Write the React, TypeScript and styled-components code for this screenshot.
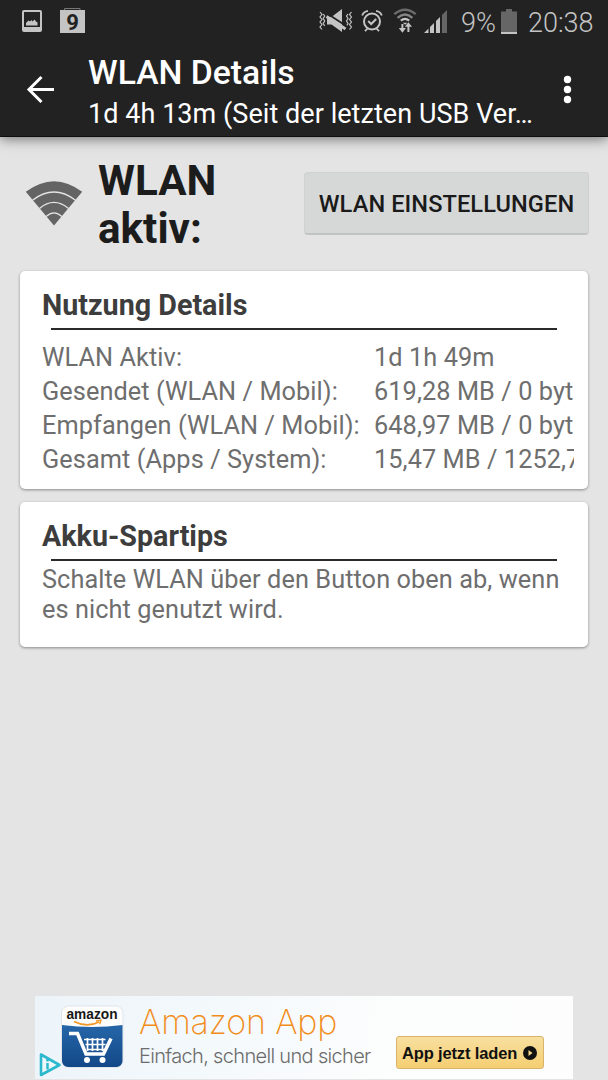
import React from "react";
import styled, { createGlobalStyle } from "styled-components";

const GlobalStyle = createGlobalStyle`
  * { box-sizing: border-box; }
  html, body { margin: 0; padding: 0; }
  body { background: #e4e4e4; font-family: Roboto, "Noto Sans", sans-serif; }
  svg { display: block; flex: none; }
`;

const Screen = styled.div`
  width: 608px;
  height: 1080px;
  display: flex;
  flex-direction: column;
  background: #e4e4e4;
  overflow: hidden;
`;

const Header = styled.header`
  height: 137px;
  flex: none;
  background: #222222;
  box-shadow: 0 2px 12px rgba(0, 0, 0, 0.5);
  border-bottom: 1px solid #0e0e0e;
`;

const StatusBar = styled.div`
  height: 42px;
  display: flex;
  align-items: center;
  padding: 0 15px 0 22px;
  color: #c4c4c4;
`;

const StatusGroup = styled.div<{ $gap: number; $push?: boolean }>`
  display: flex;
  align-items: center;
  gap: ${(p) => p.$gap}px;
  margin-left: ${(p) => (p.$push ? "auto" : "0")};
`;

const StatusText = styled.span<{ $width: number; $before: number }>`
  width: ${(p) => p.$width}px;
  margin-left: ${(p) => p.$before}px;
  font-size: 27px;
  line-height: 32px;
  padding-top: 3px;
  font-weight: 300;
  white-space: nowrap;
`;

const Toolbar = styled.div`
  height: 94px;
  display: flex;
  align-items: center;
  padding: 0 35px 0 26px;
`;

const Titles = styled.div`
  margin-left: 33px;
  width: 450px;
  color: #ffffff;
`;

const Title = styled.h1`
  margin: 0;
  padding-top: 5px;
  font-size: 33.7px;
  line-height: 40px;
  font-weight: 500;
`;

const Subtitle = styled.div`
  font-size: 27px;
  line-height: 32px;
  letter-spacing: 0.05px;
  white-space: nowrap;
  margin-top: 5px;
`;

const MoreIcon = styled.svg`
  margin-left: auto;
`;

const Summary = styled.section`
  height: 133px;
  flex: none;
  display: flex;
  align-items: center;
  padding: 0 19px 0 25px;
`;

const Heading = styled.h2`
  margin: 0 0 0 15px;
  width: 150px;
  padding-top: 2px;
  font-size: 42.2px;
  line-height: 48px;
  font-weight: 700;
  color: #1c1c1c;
`;

const SettingsButton = styled.button`
  margin-left: auto;
  width: 285px;
  height: 63px;
  padding: 1px 0 0;
  border: 1px solid #cfd1d0;
  border-bottom: 2px solid #c2c4c3;
  border-radius: 4px;
  background: #d6d8d7;
  color: #1a1a1a;
  font-family: inherit;
  font-size: 23.6px;
  letter-spacing: 0.08px;
  font-weight: 500;
  white-space: nowrap;
`;

const Card = styled.section<{ $height: number }>`
  height: ${(p) => p.$height}px;
  flex: none;
  margin: 1px 20px 12px;
  padding: 16px 14px 0 22px;
  border-radius: 5px;
  background: #ffffff;
  box-shadow: 0 1px 3px rgba(0, 0, 0, 0.4);
  color: #6e6e6e;
  font-size: 25.3px;
  letter-spacing: 0.08px;
`;

const CardTitle = styled.h3`
  margin: 0;
  font-size: 28.7px;
  line-height: 36px;
  font-weight: 700;
  letter-spacing: 0;
  color: #3d3d3d;
`;

const Rule = styled.div`
  height: 2px;
  margin: 5px 17px 0 9px;
  background: #2a2a2a;
`;

const Details = styled.dl`
  margin: 11px 0 0;
  display: grid;
  grid-template-columns: 332px 1fr;
  grid-auto-rows: 34px;
  line-height: 34px;
  white-space: nowrap;
`;

const Label = styled.dt`
  margin: 0;
`;

const Value = styled.dd`
  margin: 0;
  min-width: 0;
  overflow: hidden;
`;

const Tip = styled.p`
  margin: 4px 0 0;
  line-height: 30px;
  white-space: pre-line;
`;

const Ad = styled.aside`
  width: 538px;
  height: 83px;
  margin: auto 0 1px 35px;
  flex: none;
  display: flex;
  background: linear-gradient(100deg, #edf4f9 0%, #f4f9fc 35%, #fcfdfd 65%, #fdfdfd 100%);
`;

const AdCopy = styled.div`
  margin-left: 15px;
  width: 241px;
  font-family: Inter, "Liberation Sans", sans-serif;
  white-space: nowrap;
`;

const AdTitle = styled.div`
  padding-top: 5px;
  font-size: 34px;
  line-height: 42px;
  font-weight: 200;
  color: #f18d1d;
  letter-spacing: -0.15px;
`;

const AdText = styled.div`
  font-size: 20px;
  line-height: 26px;
  font-weight: 300;
  color: #6c6c6c;
  letter-spacing: -0.67px;
`;

const AdButton = styled.div`
  margin: 40px 0 0 16px;
  width: 148px;
  height: 33px;
  display: flex;
  align-items: center;
  gap: 6px;
  padding: 1px 0 0 5px;
  border: 1px solid #d9b36a;
  border-radius: 3px;
  background: linear-gradient(#f8dfa0, #f5cf72);
  color: #111111;
  font-family: "Liberation Sans", sans-serif;
  font-size: 16.500px;
  font-weight: 700;
  letter-spacing: -0.15px;
  white-space: nowrap;
`;

const PictureIcon = () => (
  <svg width="20" height="22" viewBox="0 0 20 22">
    <rect x="1" y="1" width="18" height="20" rx="1" fill="none" stroke="#c4c4c4" strokeWidth="2" />
    <rect x="2" y="17" width="16" height="3" fill="#c4c4c4" />
    <path d="M4 15.500v-2.500l2.500-2.500 1.500 1 1.500-1.500 1 1.500 2-2 1.500 2 1.500 1v3z" fill="#c4c4c4" />
  </svg>
);

const CalendarIcon = () => (
  <svg width="25" height="26" viewBox="0 0 25 26">
    <path d="M4.500 2V.5h15.500V2" fill="none" stroke="#777777" strokeWidth="1" />
    <path d="M0 2h25v23H0z" fill="#c4c4c4" />
    <text x="12.500" y="21.500" textAnchor="middle" fontFamily="Roboto, sans-serif" fontSize="22" fontWeight="700" fill="#222222">9</text>
  </svg>
);

const MuteIcon = () => (
  <svg width="34" height="26" viewBox="0 0 34 26">
    <g fill="none" stroke="#c4c4c4" strokeWidth="1.200">
      <path d="M1 4l2 2.500-2 2.500 2 2.500-2 2.500 2 2.500-2 2.500 2 2.500M4.200 6l1.500 2-1.500 2.500 1.500 2.500-1.500 2.500 1.500 2.500" />
      <path d="M32.500 4l-2 2.500 2 2.500-2 2.500 2 2.500-2 2.500 2 2.500-2 2.500M29 6l-1.500 2L29 10.500 27.500 13 29 15.500 27.500 18" />
    </g>
    <path d="M8 9h4.500L23 1v23l-10.500-7.500H8z" fill="#c4c4c4" />
    <path d="M8.500 5.800L28 18.500" stroke="#222222" strokeWidth="1.800" />
    <path d="M7.500 8.500L26.500 21" stroke="#c4c4c4" strokeWidth="3" />
  </svg>
);

const AlarmSvg = styled.svg`
  margin: 0 3px 0 1px;
`;

const AlarmIcon = () => (
  <AlarmSvg width="22" height="24" viewBox="0 0 22 24" fill="none" stroke="#c4c4c4">
    <circle cx="11" cy="12.500" r="8" strokeWidth="2" />
    <path d="M7.200 12l3 3 5-5" strokeWidth="2" />
    <path d="M1.200 6.500Q2.500 2.500 7 1.800M20.800 6.500Q19.500 2.500 15 1.800" strokeWidth="1.800" />
    <path d="M6.500 19.500l-2.500 2.700M15.500 19.500l2.500 2.700" strokeWidth="1.800" />
  </AlarmSvg>
);

const StatusWifiIcon = () => (
  <svg width="24" height="26" viewBox="0 0 24 26" fill="none">
    <path d="M1.300 6.200Q12 -2.800 22.700 6.200" stroke="#6c6c6c" strokeWidth="2.400" />
    <path d="M4.600 9.800Q12 3.200 19.400 9.800" stroke="#858585" strokeWidth="2.400" />
    <path d="M7.800 12.700Q12 9 16.200 12.700" stroke="#c4c4c4" strokeWidth="2.200" />
    <path d="M9.800 14.800h4.600l-2.300 2z" fill="#c4c4c4" />
    <path d="M9.400 16v5M15.400 24v-6" stroke="#c4c4c4" strokeWidth="2" />
    <path d="M5.800 20h7.200l-3.600 4.800zM11.800 18.800h7.200l-3.600-4.500z" fill="#c4c4c4" />
  </svg>
);

const SignalIcon = () => (
  <svg width="23" height="23" viewBox="0 0 23 23">
    <path d="M0 23l4.500-4.500V23zM6 17l4-4v10H6zM12 11l4-4v16h-4z" fill="#c4c4c4" />
    <path d="M18 5l5-5v23h-5z" fill="#666666" />
  </svg>
);

const BatteryIcon = () => (
  <svg width="16" height="25" viewBox="0 0 16 25">
    <path d="M5 0h6v2.500h5V25H0V2.500h5z" fill="#666666" />
    <path d="M0 23h16v2H0z" fill="#c4c4c4" />
  </svg>
);

const BackIcon = () => (
  <svg width="29" height="28" viewBox="0 0 29 28" fill="none" stroke="#ffffff" strokeWidth="3">
    <path d="M28 14.500H3M15.500 2L3 14.500 15.500 27" />
  </svg>
);

const WifiIcon = () => (
  <svg width="58" height="46" viewBox="0 0 58 46">
    <path d="M.8 10.800Q29-10.500 57.200 10.800L29 44.500z" fill="#646464" />
    <g fill="none" stroke="#e4e4e4" strokeWidth="1.300">
      <path d="M7.500 19.200Q29 2.800 50.500 19.200" />
      <path d="M14.500 27.500Q29 15.400 43.500 27.500" />
      <path d="M21 35.600Q29 28.100 37 35.600" />
    </g>
  </svg>
);

const AmazonIcon = () => (
  <svg width="89" height="83" viewBox="0 0 89 83">
    <defs>
      <linearGradient id="cartBlue" x1="0" y1="0" x2="0" y2="1">
        <stop offset="0" stopColor="#2566a8" />
        <stop offset="1" stopColor="#124888" />
      </linearGradient>
    </defs>
    <rect x="26.500" y="10" width="61.500" height="61.500" rx="7" fill="#fdfdfd" stroke="#e0e5e9" />
    <path d="M27 29Q57 33 87.500 29V65a6 6 0 0 1-6 6H33a6 6 0 0 1-6-6z" fill="url(#cartBlue)" />
    <text x="31.500" y="23" fontFamily="Liberation Sans, sans-serif" fontSize="15.500" fontWeight="700" fill="#171717" textLength="51" lengthAdjust="spacingAndGlyphs">amazon</text>
    <path d="M39 25.500Q52 32 64 26" fill="none" stroke="#f39a26" strokeWidth="1.700" />
    <path d="M61 25l5-.8-1.300 4" fill="none" stroke="#f39a26" strokeWidth="1.400" />
    <g fill="none" stroke="#ffffff">
      <path d="M34 37.500h8.500l8.500 20.500h17.500L76 42.500" strokeWidth="3.500" />
      <path d="M49 43.500h21.500M50.500 48.500h20M52 53.500h17M52.500 42v13M57.500 42v13M62.500 42v13M67.500 42v13" strokeWidth="1.700" />
    </g>
    <circle cx="52" cy="64" r="3" fill="#ffffff" />
    <circle cx="67.500" cy="64" r="3" fill="#ffffff" />
    <path d="M6 58.500L24.500 69 6 79z" fill="#eef8fa" stroke="#2cb9cd" strokeWidth="2.600" strokeLinejoin="round" />
    <path d="M12.500 63v2.500M12.500 67v6.500" stroke="#2cb9cd" strokeWidth="2.500" fill="none" />
  </svg>
);

const usage = [
  ["WLAN Aktiv:", "1d 1h 49m"],
  ["Gesendet (WLAN / Mobil):", "619,28 MB / 0 bytes"],
  ["Empfangen (WLAN / Mobil):", "648,97 MB / 0 bytes"],
  ["Gesamt (Apps / System):", "15,47 MB / 1252,78 MB"],
];

export default function App() {
  return (
    <Screen>
      <GlobalStyle />
      <Header>
        <StatusBar>
          <StatusGroup $gap={18}>
            <PictureIcon />
            <CalendarIcon />
          </StatusGroup>
          <StatusGroup $gap={7} $push>
            <MuteIcon />
            <AlarmIcon />
            <StatusWifiIcon />
            <SignalIcon />
            <StatusText $width={33} $before={7}>9%</StatusText>
            <BatteryIcon />
            <StatusText $width={65} $before={4}>20:38</StatusText>
          </StatusGroup>
        </StatusBar>
        <Toolbar>
          <BackIcon />
          <Titles>
            <Title>WLAN Details</Title>
            <Subtitle>1d 4h 13m (Seit der letzten USB Ver…</Subtitle>
          </Titles>
          <MoreIcon width="10" height="30" viewBox="0 0 10 30" fill="#ffffff">
            <circle cx="4.500" cy="5.500" r="3.700" />
            <circle cx="4.500" cy="15.500" r="3.700" />
            <circle cx="4.500" cy="25.500" r="3.700" />
          </MoreIcon>
        </Toolbar>
      </Header>
      <Summary>
        <WifiIcon />
        <Heading>WLAN aktiv:</Heading>
        <SettingsButton>WLAN EINSTELLUNGEN</SettingsButton>
      </Summary>
      <Card $height={218}>
        <CardTitle>Nutzung Details</CardTitle>
        <Rule />
        <Details>
          {usage.map(([label, value]) => (
            <React.Fragment key={label}>
              <Label>{label}</Label>
              <Value>{value}</Value>
            </React.Fragment>
          ))}
        </Details>
      </Card>
      <Card $height={145}>
        <CardTitle>Akku-Spartips</CardTitle>
        <Rule />
        <Tip>{"Schalte WLAN über den Button oben ab, wenn\nes nicht genutzt wird."}</Tip>
      </Card>
      <Ad>
        <AmazonIcon />
        <AdCopy>
          <AdTitle>Amazon App</AdTitle>
          <AdText>Einfach, schnell und sicher</AdText>
        </AdCopy>
        <AdButton>
          App jetzt laden
          <svg width="14" height="14" viewBox="0 0 14 14">
            <circle cx="7" cy="7" r="7" fill="#111111" />
            <path d="M5.500 4l4 3-4 3z" fill="#f6d78a" />
          </svg>
        </AdButton>
      </Ad>
    </Screen>
  );
}
